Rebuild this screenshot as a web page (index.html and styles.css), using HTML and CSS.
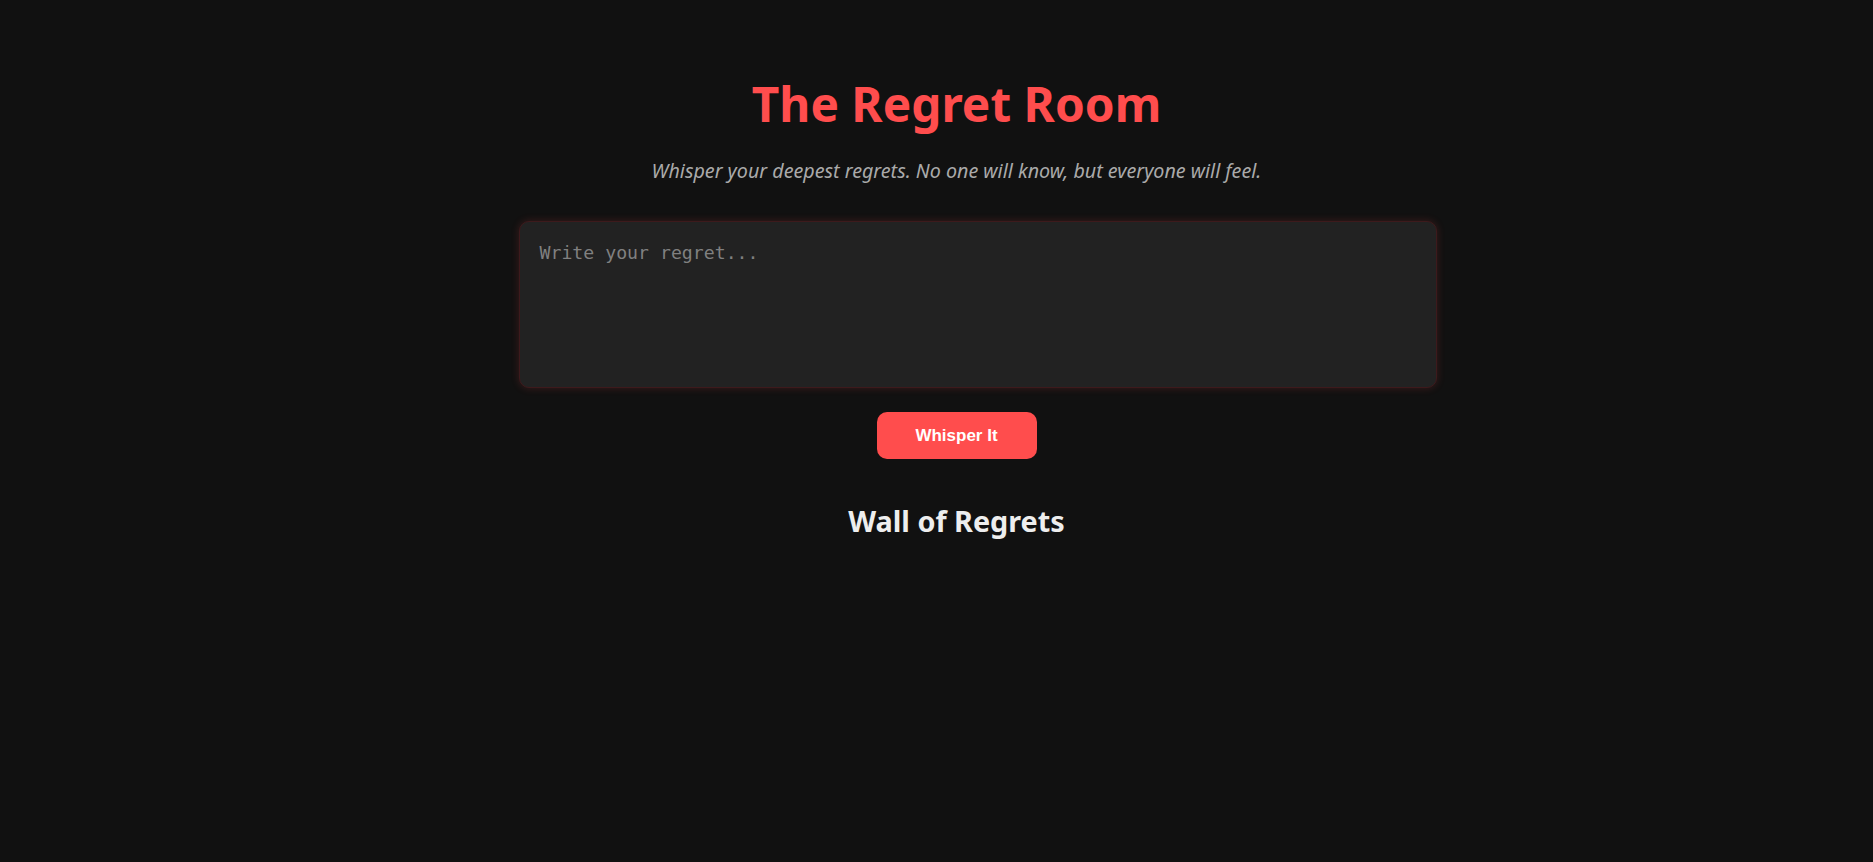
FILE: index.html
```html
<!DOCTYPE html>
<html lang="en">
<head>
<meta charset="utf-8">
<title>The Regret Room</title>
<link rel="stylesheet" href="styles.css">
</head>
<body>
<main class="container">
  <h1 class="title">The Regret Room</h1>
  <p class="subtitle">Whisper your deepest regrets. No one will know, but everyone will feel.</p>
  <textarea class="regret-input" placeholder="Write your regret..."></textarea>
  <button class="whisper-btn" type="button">Whisper It</button>
  <h2 class="wall-title">Wall of Regrets</h2>
  <div class="wall"></div>
</main>
</body>
</html>
```

FILE: styles.css
```css
html, body {
  margin: 0;
  background: #111111;
}
body {
  padding: 40px 0 0 40px;
  font-family: "Noto Sans", "Open Sans", sans-serif;
  color: #eeeeee;
}
.container {
  width: 876px;
  margin: 0 auto;
  text-align: center;
}
.title {
  margin: 0;
  padding-top: 35px;
  font-size: 47.8px;
  font-weight: 700;
  color: #ff4d4d;
  line-height: 1.2;
}
.subtitle {
  margin: 25px 0 37px;
  font-size: 19.7px;
  font-style: italic;
  color: #aaaaaa;
}
.regret-input {
  display: block;
  width: 876px;
  height: 125px;
  padding: 20px;
  margin: 0;
  background: #222222;
  border: 1px solid #3d1a1c;
  border-radius: 10px;
  box-shadow: 0 0 8px rgba(255, 77, 77, 0.18);
  font-family: "DejaVu Sans Mono", "Liberation Mono", monospace;
  font-size: 18.2px;
  color: #dddddd;
  resize: none;
  outline: none;
}
.regret-input::placeholder {
  color: #808080;
}
.whisper-btn {
  display: block;
  margin: 24px auto 0;
  width: 160px;
  height: 47px;
  border: none;
  border-radius: 10px;
  background: #ff4d4d;
  color: #ffffff;
  font-family: "Liberation Sans", Arial, sans-serif;
  font-weight: 700;
  font-size: 17px;
}
.wall-title {
  margin: 42px 0 0;
  font-size: 28.8px;
  font-weight: 700;
  color: #eeeeee;
}
```
